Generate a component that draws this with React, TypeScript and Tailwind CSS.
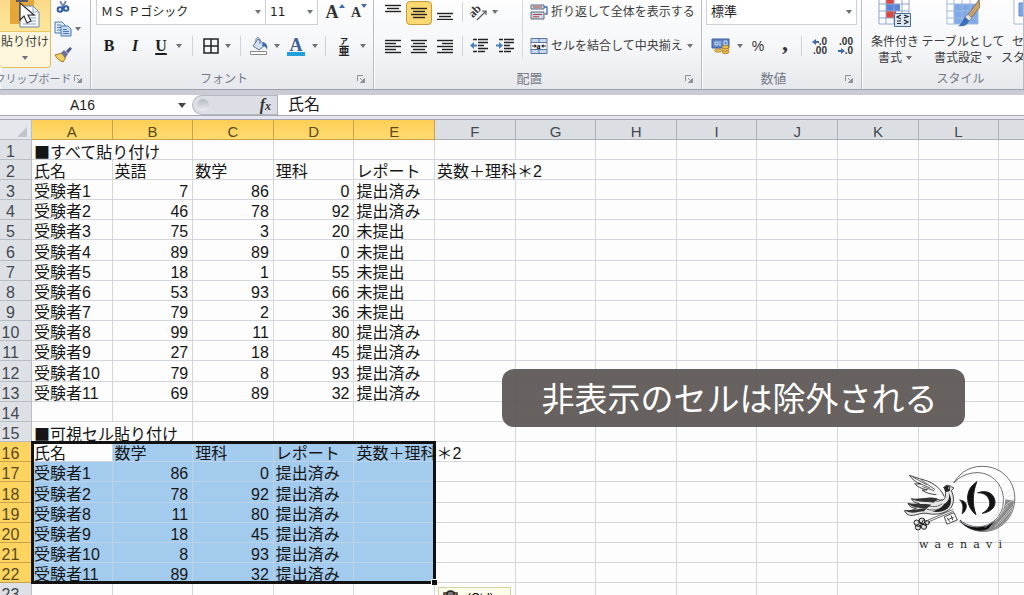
import React from "react";

type Box = { children?: React.ReactNode; className?: string };

const jp = "font-['Liberation_Sans','Noto_Sans_CJK_JP',sans-serif]";

function Caret({ className = "" }: { className?: string }) {
  return (
    <svg viewBox="0 0 6 4" className={`h-1 w-1.5 shrink-0 ${className}`} aria-hidden="true">
      <path d="M0 0h6L3 4z" fill="#6d7178" />
    </svg>
  );
}

function Drop({ label, className = "w-2.5" }: { label: string; className?: string }) {
  return (
    <button type="button" aria-label={label} className={`flex h-6 shrink-0 items-center justify-center ${className}`}>
      <Caret />
    </button>
  );
}

function Tool({ label, className = "h-6 w-[26px]", children }: Box & { label: string }) {
  return (
    <button type="button" aria-label={label} className={`flex shrink-0 items-center justify-center ${className}`}>
      {children}
    </button>
  );
}

function Sep({ className }: { className: string }) {
  return (
    <span className={`flex h-6 shrink-0 justify-center ${className}`}>
      <span className="h-5 w-px self-center bg-[#cfd2d8]" />
    </span>
  );
}

function Group({
  title,
  className = "",
  titleClass = "text-xs",
  launcher = true,
  children,
}: Box & { title: string; titleClass?: string; launcher?: boolean }) {
  return (
    <section
      aria-label={title}
      className={`flex h-full flex-col justify-between overflow-hidden border-r border-[#b9bdc5] shadow-[inset_1px_0_0_#fcfdfe] ${className}`}
    >
      <div className="h-[68px]">{children}</div>
      <div className="flex h-5 items-center pr-2 text-[#757a86]">
        <span className={`flex flex-1 justify-center whitespace-nowrap ${titleClass}`}>{title}</span>
        {launcher && (
          <button type="button" aria-label={`${title}の設定`}>
            <svg viewBox="0 0 8 8" className="size-2" fill="none" stroke="#8b909b">
              <path d="M.5 6V.5H6M3 3l3 3" />
              <path d="M7.5 3.5v4h-4z" fill="#8b909b" />
            </svg>
          </button>
        )}
      </div>
    </section>
  );
}

function Combo({ label, value, className }: { label: string; value: string; className: string }) {
  return (
    <div className={`relative h-[25px] shrink-0 border border-t-0 border-[#cdd0d6] bg-white ${className}`}>
      <select aria-label={label} className="h-full w-full appearance-none bg-transparent pl-1 text-[#1c1c1c] outline-none">
        <option>{value}</option>
      </select>
      <Caret className="pointer-events-none absolute top-2.5 right-1" />
    </div>
  );
}

function Lines({ rows, top = 0 }: { rows: [number, number][]; top?: number }) {
  return (
    <svg viewBox="0 0 16 16" className="size-4" stroke="#222" strokeWidth="1.4">
      {rows.map(([x, w], i) => (
        <path key={i} d={`M${x} ${top + i * 3 + 0.5}h${w}`} />
      ))}
    </svg>
  );
}

function Indent({ right }: { right?: boolean }) {
  return (
    <svg viewBox="0 0 20 16" className="h-4 w-5">
      <g stroke="#222" strokeWidth="1.6">
        <path d="M4 1.5h4M9 1.5h10M9 4.5h10M9 7.5h6M9 10.5h10M4 13.5h4M9 13.5h7" />
      </g>
      <path d={right ? "M1 6.5h3V4l4 3.5L4 11V8.5H1z" : "M8 6.5H5V4L1 7.5 5 11V8.5h3z"} fill="#4a7fc0" />
    </svg>
  );
}

function Clipboard() {
  return (
    <div className="flex h-full">
      <button
        type="button"
        className="flex h-[68px] w-[51px] flex-col items-center overflow-hidden rounded-b-sm border border-t-0 border-l-0 border-[#e0bd57] bg-[#fdf6dc] text-xs text-[#3c3c3c]"
      >
        <span className="flex h-8 w-full shrink-0 items-start justify-center border-b border-[#ecc766] bg-linear-to-b from-[#fbd98a] to-[#fde79a]">
          <svg viewBox="0 0 32 32" className="size-8">
            <path d="M1 0h24v24H1z" fill="#e5a63c" />
            <path d="M7 0h12v2H7z" fill="#555b66" />
            <path d="M11 6h13l6 6v15H11z" fill="#f6f9fd" stroke="#6f86a5" />
            <path d="M24 6v6h6M19 15h8M21 18h6M21 21h6M14 24h13" fill="none" stroke="#8fa5c1" />
            <path d="M11 3v17l4-4 3 7 4-2-3-6h6z" fill="#fff" stroke="#333" strokeWidth="1.2" />
          </svg>
        </span>
        <span className="mt-0.5 leading-4 whitespace-nowrap">貼り付け</span>
        <Caret className="mt-1.5" />
      </button>
      <div className="flex flex-col pl-0.5">
        <Tool label="切り取り" className="h-[15px] w-5">
          <svg viewBox="0 0 18 14" className="h-3.5 w-[18px]" fill="none">
            <path d="M6 0l4 7M12 0L8 7" stroke="#6f86ab" strokeWidth="1.8" />
            <circle cx="6" cy="8.5" r="2.3" stroke="#2f5ea8" strokeWidth="2" />
            <circle cx="12" cy="7.5" r="2.3" stroke="#2f5ea8" strokeWidth="2" />
          </svg>
        </Tool>
        <div className="mt-0.5 flex">
          <Tool label="コピー" className="h-6 w-5">
            <svg viewBox="0 0 18 16" className="h-4 w-[18px]" stroke="#4a78b8">
              <path d="M1 1h7l3 3v8H1z" fill="#e3edfa" />
              <path d="M3 4h4M3 6.5h5M3 9h5" />
              <path d="M7 5h7l3 3v7H7z" fill="#c9dcf4" />
              <path d="M9 8.5h4M9 10.5h6M9 12.5h6" />
            </svg>
          </Tool>
          <Drop label="コピーのオプション" className="w-2.5" />
        </div>
        <Tool label="書式のコピー" className="h-7 w-5">
          <svg viewBox="0 0 18 16" className="h-4 w-[18px]">
            <path d="M1 8l7-2 4 4-3 5c-3-1-6-3-8-7z" fill="#f0cf62" stroke="#a57a22" />
            <path d="M7 6l3-3 4 4-3 4z" fill="#6a6f9b" />
            <path d="M12 4l4-4 2 1.500-4 5z" fill="#4c5a94" />
          </svg>
        </Tool>
      </div>
    </div>
  );
}

function FontTools() {
  return (
    <div className="flex flex-col gap-2.5 pl-[5px]">
      <div className="flex h-6">
        <Combo label="フォント" value="ＭＳ Ｐゴシック" className="w-[170px] text-xs" />
        <Combo label="フォント サイズ" value="11" className="-ml-px w-[53px] font-['DejaVu_Sans',sans-serif] text-xs" />
        <Tool label="フォント サイズの拡大" className="h-6 w-[30px] pl-1">
          <span className="font-['Liberation_Serif',serif] text-lg font-bold text-[#333]">A</span>
          <svg viewBox="0 0 6 4" className="mb-3 h-1 w-1.5"><path d="M0 4l3-4 3 4z" fill="#3d6aa8" /></svg>
        </Tool>
        <Tool label="フォント サイズの縮小" className="h-6 w-[22px]">
          <span className="mt-0.5 font-['Liberation_Serif',serif] text-sm font-bold text-[#333]">A</span>
          <svg viewBox="0 0 6 4" className="mb-3 h-1 w-1.5"><path d="M0 0h6L3 4z" fill="#3d6aa8" /></svg>
        </Tool>
      </div>
      <div className="flex h-6 font-['Liberation_Serif',serif] text-base font-bold text-[#1d1d1d]">
        <Tool label="太字">B</Tool>
        <Tool label="斜体"><i>I</i></Tool>
        <Tool label="下線"><span className="underline decoration-2 underline-offset-2">U</span></Tool>
        <Drop label="下線の種類" />
        <Sep className="w-4" />
        <Tool label="罫線" className="h-6 w-[22px]">
          <svg viewBox="0 0 16 16" className="size-4" fill="none" stroke="#222" strokeWidth="1.5"><path d="M1 1h14v14H1zM8 1v14M1 8h14" /></svg>
        </Tool>
        <Drop label="罫線の種類" className="w-3" />
        <Sep className="w-3" />
        <Tool label="塗りつぶしの色">
          <svg viewBox="0 0 20 18" className="h-[18px] w-5">
            <path d="M9 2l7 6-6 5-6-4z" fill="#d5e0f0" stroke="#57739e" />
            <path d="M7 5c-1-5 3-6 4-2v4" fill="none" stroke="#57739e" />
            <path d="M14 5c4 1 5 5 4 8-1-3-2-4-5-4z" fill="#3b69ab" />
            <path d="M1.500 14.500h16v3h-16z" fill="#fff" stroke="#888" />
          </svg>
        </Tool>
        <Drop label="塗りつぶしの色を選択" />
        <Tool label="フォントの色" className="h-6 w-7">
          <span className="flex flex-col items-center text-[#3d5f94]">
            <span className="h-[15px] text-lg leading-4">A</span>
            <span className="h-1 w-[18px] bg-[#22a0dc]" />
          </span>
        </Tool>
        <Drop label="フォントの色を選択" />
        <Sep className="w-2.5" />
        <Tool label="ふりがな" className="h-6 w-7">
          <span className="flex flex-col items-center font-['Noto_Sans_CJK_JP',sans-serif] text-[#222]">
            <span className="text-[8px] leading-[8px]">ア</span>
            <span className="text-[11px] leading-[11px]">亜</span>
          </span>
        </Tool>
        <Drop label="ふりがなのオプション" />
      </div>
    </div>
  );
}

const full: [number, number] = [0, 16];
const mid: [number, number] = [2, 12];

function Alignment() {
  return (
    <div className="flex text-xs text-[#3c3c3c]">
      <div className="flex w-[149px] flex-col gap-2.5 border-r border-[#d5d8dd] pl-1.5">
        <div className="flex h-6">
          <Tool label="上揃え"><Lines rows={[full, mid, full]} top={1} /></Tool>
          <Tool label="上下中央揃え" className="mt-px h-6 w-[26px] rounded-sm border border-[#c79a3c] bg-[#fcd873]">
            <Lines rows={[full, mid, full, mid]} top={3} />
          </Tool>
          <Tool label="下揃え"><Lines rows={[full, mid, full]} top={9} /></Tool>
          <Sep className="w-2" />
          <Tool label="方向">
            <svg viewBox="0 0 20 18" className="h-[18px] w-5">
              <text x="0" y="12" transform="rotate(-45 6 9)" fontSize="12" fontWeight="bold" fontFamily="Liberation Serif" fill="#333">ab</text>
              <path d="M8 17L17 8M13 8h4v4" fill="none" stroke="#555" strokeWidth="1.2" />
            </svg>
          </Tool>
          <Drop label="方向の種類" className="w-1.5" />
        </div>
        <div className="flex h-6">
          <Tool label="左揃え"><Lines rows={[full, [0, 11], full, [0, 11], full]} top={2} /></Tool>
          <Tool label="中央揃え"><Lines rows={[full, mid, full, mid, full]} top={2} /></Tool>
          <Tool label="右揃え"><Lines rows={[full, [5, 11], full, [5, 11], full]} top={2} /></Tool>
          <Sep className="w-2" />
          <Tool label="インデントを減らす"><Indent /></Tool>
          <Tool label="インデントを増やす"><Indent right /></Tool>
        </div>
      </div>
      <div className="flex flex-col gap-2.5 pl-[7px]">
        <button type="button" className="flex h-6 items-center gap-[3px] whitespace-nowrap">
          <svg viewBox="0 0 18 18" className="size-[18px]">
            <path d="M1 2h13v4H1zM1 9h13v7H1z" fill="#cfd9e8" stroke="#59677c" />
            <path d="M3 4h9M3 11.500h9M3 13.800h6" stroke="#a8453b" />
            <path d="M14 4h3v7h-2" fill="none" stroke="#3d6eb0" strokeWidth="1.3" />
          </svg>
          折り返して全体を表示する
        </button>
        <div className="flex h-6">
          <button type="button" className="flex h-6 items-center gap-[3px] whitespace-nowrap">
            <svg viewBox="0 0 18 18" className="size-[18px]">
              <path d="M1 1.500h16v15H1zM1 5.500h16M1 12.500h16M9 1.500v4M9 12.500v4" fill="#c7d8ef" stroke="#5877a5" />
              <path d="M1.500 6h15v6h-15z" fill="#fff" />
              <path d="M2 9h4M12 9h4" stroke="#222" />
              <path d="M4.500 7L7 9l-2.500 2zM13.500 7L11 9l2.500 2z" fill="#222" />
              <text x="6.500" y="11.500" fontSize="8" fontWeight="bold" fontFamily="Liberation Serif">a</text>
            </svg>
            セルを結合して中央揃え
          </button>
          <Drop label="結合の種類" className="w-3.5" />
        </div>
      </div>
    </div>
  );
}

function Decimals({ up }: { up?: boolean }) {
  return (
    <span className="flex w-5 flex-col items-end text-[10px] leading-[9px] font-bold text-[#333]">
      <span className="flex items-center">
        {up && <svg viewBox="0 0 7 6" className="h-1.5 w-[7px]"><path d="M7 2H4V0L0 3l4 3V4h3z" fill="#3d6aa8" /></svg>}
        {up ? ".0" : ".00"}
      </span>
      <span className="flex items-center">
        {!up && <svg viewBox="0 0 7 6" className="h-1.5 w-[7px]"><path d="M0 2h3V0l4 3-4 3V4H0z" fill="#3d6aa8" /></svg>}
        {up ? ".00" : ".0"}
      </span>
    </span>
  );
}

function NumberTools() {
  return (
    <div className="flex flex-col gap-2.5 pl-1">
      <div className="h-6">
        <Combo label="表示形式" value="標準" className="w-[151px] text-[13px]" />
      </div>
      <div className="flex h-6 text-[#333]">
        <Tool label="通貨表示形式" className="h-6 w-[30px]">
          <svg viewBox="0 0 20 18" className="h-[18px] w-5">
            <path d="M1 2h17v9H1z" fill="#5d83c4" stroke="#3d5f9d" />
            <path d="M4 5h3v3H4zM9 4v5M13 4h3v4h-3z" fill="none" stroke="#d3e0f4" />
            <g fill="#eebf4e" stroke="#9b701d" strokeWidth=".7">
              <ellipse cx="14.500" cy="15" rx="3.500" ry="1.700" />
              <ellipse cx="14.500" cy="12.500" rx="3.500" ry="1.700" />
              <ellipse cx="14.500" cy="10" rx="3.500" ry="1.700" />
              <ellipse cx="7" cy="13.500" rx="3.500" ry="1.700" />
            </g>
          </svg>
        </Tool>
        <Drop label="通貨の種類" className="w-2" />
        <Tool label="パーセント スタイル" className="h-6 w-7 text-sm">%</Tool>
        <Tool label="桁区切りスタイル" className="h-6 w-[26px] pb-2 font-['Liberation_Serif',serif] text-2xl font-bold">,</Tool>
        <Sep className="w-1.5" />
        <Tool label="小数点以下の表示桁数を増やす"><Decimals up /></Tool>
        <Tool label="小数点以下の表示桁数を減らす"><Decimals /></Tool>
      </div>
    </div>
  );
}

function BigButton({ lines, className, menu = true, children }: Box & { lines: [string, string]; menu?: boolean }) {
  return (
    <button type="button" className={`flex h-[68px] shrink-0 flex-col items-center text-xs leading-4 whitespace-nowrap text-[#3c3c3c] ${className}`}>
      <span className="flex h-[34px] items-start">{children}</span>
      <span>{lines[0]}</span>
      <span className="flex items-center gap-1">
        {lines[1]}
        {menu && <Caret />}
      </span>
    </button>
  );
}

function Styles() {
  return (
    <div className="flex pl-1">
      <BigButton lines={["条件付き", "書式"]} className="w-[58px]">
        <svg viewBox="0 0 34 28" className="h-7 w-[34px]">
          <path d="M1 -4h30v28H1z" fill="#fff" />
          <path d="M8 -2h8v6H8zM8 11h10v7H8z" fill="#e0473c" />
          <path d="M8 4h14v7H8z" fill="#5f86d6" />
          <path d="M1 -1v25h30V-1M1 4h30M1 11h30M1 18h30M8 0v24M16 0v24M24 0v24" fill="none" stroke="#8ea5cc" />
          <path d="M16.500 13.500h16v13h-16z" fill="#dce8f5" stroke="#4e6f95" />
          <path d="M23 15l-4 2 4 2M19 21h4M19 23.500h4M26 15l4 1.500-4 1.500M26 20l4 2-4 2" fill="none" stroke="#222" strokeWidth="1.2" />
        </svg>
      </BigButton>
      <BigButton lines={["テーブルとして", "書式設定"]} className="w-[78px]">
        <svg viewBox="0 0 34 28" className="h-7 w-[34px]">
          <path d="M1 -4h31v28H1z" fill="#fff" />
          <path d="M8 4h24v20H8z" fill="#7fa8e8" />
          <path d="M1 -1v25h31V-1M1 4h31M1 11h31M1 18h31M8 0v24M16 0v24M24 0v24" fill="none" stroke="#a3b9dc" />
          <path d="M33 0L21 16l3 3L34 7z" fill="#c9a36b" stroke="#7a6248" strokeWidth=".8" />
          <path d="M22 14l4 4-3 3-4-4z" fill="#ddd" stroke="#777" strokeWidth=".8" />
          <path d="M19 17l4 4c-2 5-7 6-11 5 4-2 4-6 7-9z" fill="#3c70b8" />
        </svg>
      </BigButton>
      <BigButton lines={["セルの", "スタイル"]} className="w-14">
        <svg viewBox="0 0 34 28" className="h-7 w-[34px]">
          <path d="M1 -2h31v26H1z" fill="#fff" stroke="#a3b9dc" />
          <path d="M6 3h22v13H6z" fill="#7fa8e8" stroke="#6488c4" />
          <path d="M15 24l4-5 5 5z" fill="#3c70b8" />
        </svg>
      </BigButton>
    </div>
  );
}

function FormulaBar() {
  return (
    <div className="flex h-5 shrink-0 bg-[#dbdfe5] text-[#1c1c1c]">
      <input aria-label="名前ボックス" defaultValue="A16" className="w-[165px] bg-white text-center text-sm outline-none" />
      <button type="button" aria-label="名前の一覧" className="flex w-[27px] items-center justify-center bg-white pl-1.5">
        <svg viewBox="0 0 8 5" className="h-[5px] w-2"><path d="M0 0h8L4 5z" fill="#444" /></svg>
      </button>
      <div className="flex w-[86px] items-center border-r border-[#a9adb5] bg-white">
        <div className="flex h-5 w-full items-center justify-between rounded-l-full border border-r-0 border-[#b4b8c0] bg-[#dbdfe5] pr-1.5 pl-1">
          <span className="size-3 rounded-full bg-linear-to-b from-[#b5bac3] to-[#eceef2]" />
          <button type="button" aria-label="関数の挿入" className="font-['Liberation_Serif',serif] text-base leading-none font-bold text-[#333] italic">
            f<span className="text-xs">x</span>
          </button>
        </div>
      </div>
      <input aria-label="数式バー" defaultValue="氏名" className="min-w-0 flex-1 bg-white pl-2.5 text-base outline-none" />
    </div>
  );
}

const columns = ["A", "B", "C", "D", "E", "F", "G", "H", "I", "J", "K", "L", "M"];

const upper: [string, string, string, string][] = [
  ["7", "86", "0", "提出済み"],
  ["46", "78", "92", "提出済み"],
  ["75", "3", "20", "未提出"],
  ["89", "89", "0", "未提出"],
  ["18", "1", "55", "未提出"],
  ["53", "93", "66", "未提出"],
  ["79", "2", "36", "未提出"],
  ["99", "11", "80", "提出済み"],
  ["27", "18", "45", "提出済み"],
  ["79", "8", "93", "提出済み"],
  ["69", "89", "32", "提出済み"],
];

const rows: string[][] = [
  ["■すべて貼り付け"],
  ["氏名", "英語", "数学", "理科", "レポート", "英数＋理科＊2"],
  ...upper.map((r, i) => [`受験者${i + 1}`, ...r]),
  [],
  ["■可視セル貼り付け"],
  ["氏名", "数学", "理科", "レポート", "英数＋理科＊2"],
  ...[1, 2, 8, 9, 10, 11].map((n) => [`受験者${n}`, ...upper[n - 1].slice(1)]),
  [],
  [],
];

function Row({ n, cells }: { n: number; cells: string[] }) {
  const picked = n >= 16 && n <= 22;
  const out: React.ReactNode[] = [];
  for (let c = 0; c < columns.length; c++) {
    const text = cells[c] ?? "";
    const title = text.startsWith("■");
    const wide = title || (c === 5 && text !== "");
    const blue = picked && c < 5 && !(n === 16 && c === 0);
    const numeric = /^\d+$/.test(text);
    out.push(
      <td
        key={c}
        colSpan={wide ? 2 : 1}
        className={`border-r border-b p-0 pt-1 whitespace-nowrap ${blue ? "border-[#bcd3ea] bg-[#a3cbee]" : "border-[#d3d6dc]"} ${numeric ? "pr-1 text-right" : "pl-0.5"} ${title ? "font-['Noto_Sans_CJK_JP',sans-serif]" : ""}`}
      >
        {text}
      </td>,
    );
    if (wide) c++;
  }
  return (
    <tr className={n % 6 === 0 ? "h-[21px]" : "h-5"}>
      <th
        scope="row"
        className={`border-r border-b p-0 pt-1 pr-2.5 text-center font-normal ${picked ? "border-[#c9a24a] bg-[#fdd45f] text-[#5b4a1e]" : "border-[#b9bec6] bg-[#dde1e6] text-[#43474e]"}`}
      >
        {n}
      </th>
      {out}
    </tr>
  );
}

function Sheet() {
  return (
    <div className="relative flex-1 overflow-hidden bg-[#fdfdfd]">
      <table className="w-[1080px] table-fixed border-separate border-spacing-0 text-base leading-[15px] text-[#161616]">
        <colgroup>
          <col className="w-8" />
          {columns.map((c) => (
            <col key={c} />
          ))}
        </colgroup>
        <thead>
          <tr className="h-5">
            <th className="border-r border-b border-[#b9bec6] bg-[#e4e7ec] p-0">
              <svg viewBox="0 0 10 10" className="mt-1 ml-[17px] size-2.5"><path d="M10 0v10H0z" fill="#c0c4cb" /></svg>
            </th>
            {columns.map((c, i) => (
              <th
                key={c}
                scope="col"
                className={`border-r border-b p-0 pt-1 text-center text-[15px] font-normal ${i < 5 ? "border-[#c9a24a] bg-linear-to-b from-[#fccf55] to-[#fedb70] text-[#5b4a1e]" : "border-[#abb0b9] bg-[#dbdfe4] text-[#43474e]"}`}
              >
                {c}
              </th>
            ))}
          </tr>
        </thead>
        <tbody>
          {rows.map((cells, i) => (
            <Row key={i} n={i + 1} cells={cells} />
          ))}
        </tbody>
      </table>

      <div className="pointer-events-none absolute top-[321px] left-[31px] h-[143px] w-[405px] border-3 border-[#111]">
        <span className="absolute -right-1 -bottom-1 size-1.5 border-t border-l border-white bg-[#111]" />
      </div>

      <button
        type="button"
        className="absolute top-[467px] left-[438px] flex h-6 w-[73px] items-start gap-1.5 border border-[#d6cf9f] bg-[#fdfbea] pt-0.5 pl-1 text-xs"
      >
        <svg viewBox="0 0 18 18" className="size-[18px]">
          <path d="M1 3h13v14H1z" fill="#c9953e" stroke="#333" strokeWidth="1.5" />
          <path d="M4 4c0-4 7-4 7 0v2H4z" fill="#777" stroke="#222" strokeWidth="1.5" />
          <path d="M7 8h9v9H7z" fill="#fff" stroke="#444" />
        </svg>
        (Ctrl)
        <Caret className="mt-2" />
      </button>
    </div>
  );
}

function Logo() {
  return (
    <div className="absolute top-[460px] right-1 w-[120px] text-[#222]">
      <svg viewBox="30 30 360 225" className="h-[75px] w-[120px]" fill="none" stroke="#222" strokeLinecap="round">
        <path d="M192 98C212 62 250 44 292 50c52 8 86 50 82 104-5 56-50 94-102 90-28-3-48-14-62-34 22 18 48 24 72 18 38-10 62-44 58-86-4-44-40-76-82-74-28 2-50 12-66 30z" fill="#fff" strokeWidth="2" />
        <path d="M208 212c18 16 42 22 66 18 42-6 70-40 72-82l26 4c-4 54-46 94-98 92-28-2-50-14-66-32z" fill="#8a8a8a" stroke="none" />
        <path d="M205 210c20 18 42 24 64 22 20-2 36-10 48-22-10 24-30 34-52 32-24-2-44-14-60-32z" fill="#111" stroke="none" />
        <path d="M286 232l50-60M300 232l54-66M316 230l50-60M330 220l38-44M340 150l30-20M338 138l28-22M328 112l26-20M344 168l28-22" stroke="#ddd" strokeWidth="2" />
        <path d="M260 96c-38 22-34 74-2 98-12-32-10-66 2-98z" fill="#111" strokeWidth="3" />
        <path d="M264 128c28-10 50 4 51 28 0 18-14 30-38 34 16-10 24-20 22-34-2-16-14-28-35-28z" fill="#111" strokeWidth="3" />
        <path d="M210 150c14 2 21 10 19 22-2 10-7 16-13 20 4-18 4-30-6-42z" fill="#111" strokeWidth="2" />

        <path d="M162 138C150 110 124 94 88 86L58 76c10 14 22 22 34 26-8 0-14 0-18-1 12 12 26 17 38 18-6 2-12 2-16 1 12 10 26 12 42 14" fill="#f5f5f5" strokeWidth="2.5" />
        <path d="M70 82l40 22M84 98l36 16M98 110l34 12M94 90l40 28" strokeWidth="2" />
        <path d="M162 112c4-8 16-8 22-2l8 4-8 8c8 16 10 36-2 52-16 18-46 22-72 16-14-2-28 4-40 6-10 2-20-2-27-14 14 2 26-2 36-7-12 0-22-5-25-15 12 4 24 4 34 0-12-1-20-6-24-14 26 6 56-8 80 2 12 6 20 2 22-10 2-10 0-18-4-26z" fill="#e5e5e5" strokeWidth="2.5" />
        <path d="M62 146c26 6 56-10 82 2l-14 10c-20-4-42 0-68-12zM54 160c26 4 46 0 70 4l-12 10c-20 0-44 2-58-14zM44 180c22 4 44-6 68-6l-10 10c-22 2-40 10-58-4z" fill="#333" stroke="none" />
        <path d="M162 112c4-6 14-7 19-1l-2 12-12 4zM162 162c14-8 18-20 14-34 10 18 10 36-4 48-14 10-32 12-46 8 18-4 28-10 36-22z" fill="#222" stroke="none" />
        <path d="M118 168c14 4 26 2 38-6M112 178c16 4 32 2 46-6M136 152c8 4 14 2 20-4" strokeWidth="2" />
        <circle cx="176" cy="114" r="2" fill="#fff" stroke="none" />
        <path d="M108 213l80-34M110 218l80-34" strokeWidth="2" />
        <path d="M164 200l28-12 10 22-30 12zM172 204l6 10M184 198l4 12M176 208l14-6" fill="#fff" strokeWidth="2.5" />
        <g fill="#ddd" strokeWidth="3">
          <circle cx="96" cy="213" r="9" />
          <circle cx="80" cy="218" r="8" />
          <circle cx="84" cy="232" r="8" />
          <circle cx="102" cy="230" r="8" />
          <circle cx="112" cy="218" r="6" />
        </g>
        <path d="M86 214l22 14M90 230l10-20M76 226l12 4" strokeWidth="3" />
      </svg>
      <div className="mt-1 flex justify-between pr-[18px] pl-[19px] font-['DejaVu_Serif',serif] text-[11px] leading-3">
        {"waenavi".split("").map((ch, i) => (
          <span key={i}>{ch}</span>
        ))}
      </div>
    </div>
  );
}

export default function App() {
  return (
    <div className={`relative flex h-screen flex-col overflow-hidden bg-[#fdfdfd] ${jp}`}>
      <header className="flex h-[89px] shrink-0 bg-linear-to-b from-[#fdfdfe] via-[#f6f7f9] to-[#e5e8ec]">
        <Group title="クリップボード" titleClass="-ml-2 text-[11px]" className="w-[91px] shrink-0"><Clipboard /></Group>
        <Group title="フォント" className="w-[283px] shrink-0"><FontTools /></Group>
        <Group title="配置" titleClass="text-[13px]" className="w-[328px] shrink-0"><Alignment /></Group>
        <Group title="数値" titleClass="text-[13px]" className="w-40 shrink-0"><NumberTools /></Group>
        <Group title="スタイル" titleClass="pl-11 text-xs" className="min-w-0 flex-1" launcher={false}><Styles /></Group>
      </header>
      <div className="h-1.5 shrink-0 border-t border-[#9da1a9] bg-[#c9ccd2]" />
      <FormulaBar />
      <div className="h-[5px] shrink-0 border-t border-b border-[#a7a7b4] bg-[#e6e6f0]" />
      <Sheet />
      <Logo />
      <p className="absolute top-[369px] left-[502px] flex h-[58px] w-[463px] items-center justify-center rounded-xl bg-[#5d5855]/94 pl-3 font-['Noto_Sans_CJK_JP',sans-serif] text-[33px] whitespace-nowrap text-white">
        非表示のセルは除外される
      </p>
    </div>
  );
}
